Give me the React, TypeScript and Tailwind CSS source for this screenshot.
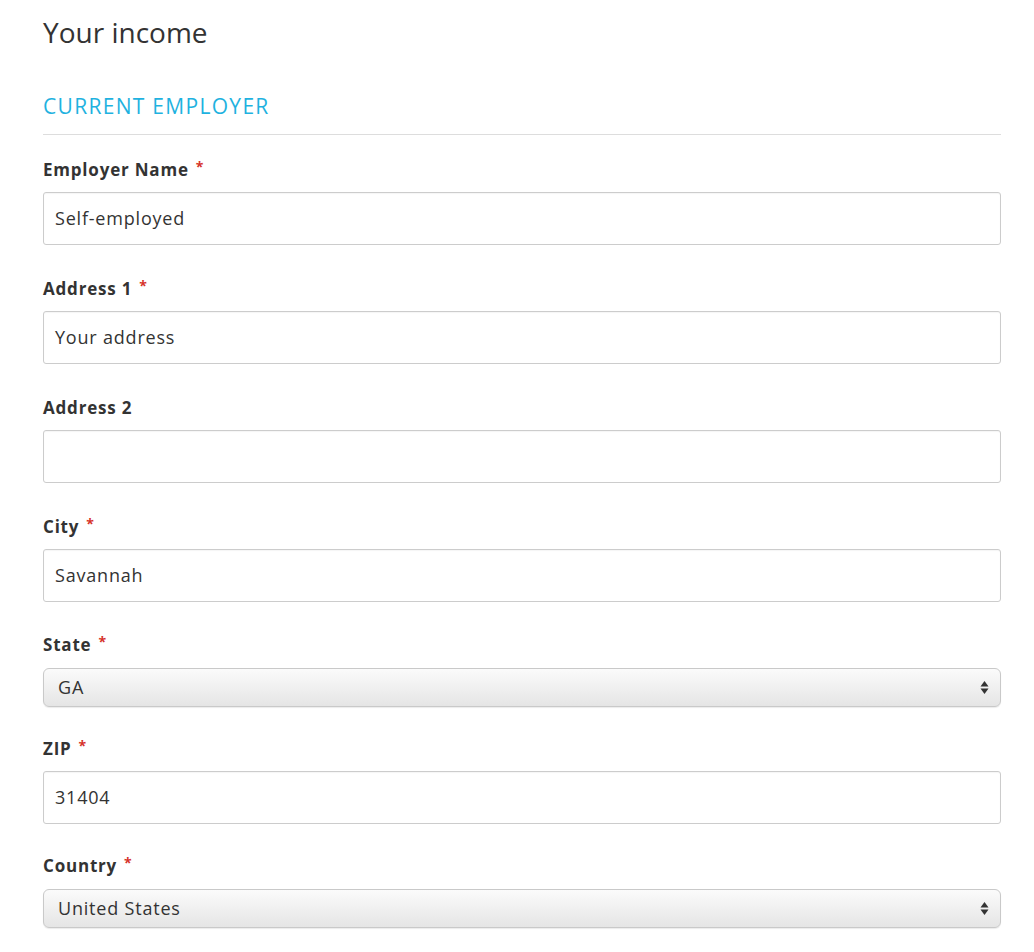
import React from "react";

const font = { fontFamily: '"Open Sans", "Noto Sans", sans-serif' };

function Label({ text, required }: { text: string; required?: boolean }) {
  return (
    <div className="text-[17px] leading-[24px] font-bold tracking-[0.8px] text-[#333333] flex items-start">
      <span>{text}</span>
      {required && <span className="ml-[7px] text-[#d6332b] text-[14px] leading-[18px]">*</span>}
    </div>
  );
}

function TextField({ value }: { value: string }) {
  return (
    <div className="mt-[10px] h-[53px] w-full rounded-[3px] border border-[#cccccc] bg-white px-[11px] flex items-center text-[18px] tracking-[0.8px] text-[#333333] shadow-[inset_0_1px_1px_rgba(0,0,0,0.04)]">
      {value}
    </div>
  );
}

function SelectField({ value }: { value: string }) {
  return (
    <div className="mt-[11px] h-[39px] w-full rounded-[6px] border border-[#c9c9c9] bg-gradient-to-b from-[#fbfbfb] to-[#e5e5e5] pl-[14px] pr-[10px] flex items-center justify-between text-[18px] tracking-[0.8px] text-[#333333] shadow-[0_1px_1px_rgba(0,0,0,0.08)]">
      <span>{value}</span>
      <svg width="9" height="15" viewBox="0 0 9 15" className="mr-[1px]">
        <path d="M4.5 1 L8.5 6.5 L0.5 6.5 Z" fill="#333" />
        <path d="M4.5 14 L8.5 8.5 L0.5 8.5 Z" fill="#333" />
      </svg>
    </div>
  );
}

export default function App() {
  return (
    <div className="min-h-[952px] w-[1034px] bg-white" style={font}>
      <div className="pl-[43px] pr-[33px] pt-[14px]">
        <h1 className="text-[28px] leading-[36px] font-normal text-[#333333]">Your income</h1>

        <h2 className="mt-[42px] pb-[14px] border-b border-[#dddddd] text-[21px] leading-[28px] tracking-[1.3px] font-normal text-[#1fb2e0]">
          CURRENT EMPLOYER
        </h2>

        <div className="mt-[23px]">
          <Label text="Employer Name" required />
          <TextField value="Self-employed" />
        </div>

        <div className="mt-[32px]">
          <Label text="Address 1" required />
          <TextField value="Your address" />
        </div>

        <div className="mt-[32px]">
          <Label text="Address 2" />
          <TextField value="" />
        </div>

        <div className="mt-[32px]">
          <Label text="City" required />
          <TextField value="Savannah" />
        </div>

        <div className="mt-[31px]">
          <Label text="State" required />
          <SelectField value="GA" />
        </div>

        <div className="mt-[30px]">
          <Label text="ZIP" required />
          <TextField value="31404" />
        </div>

        <div className="mt-[30px]">
          <Label text="Country" required />
          <SelectField value="United States" />
        </div>
      </div>
    </div>
  );
}
